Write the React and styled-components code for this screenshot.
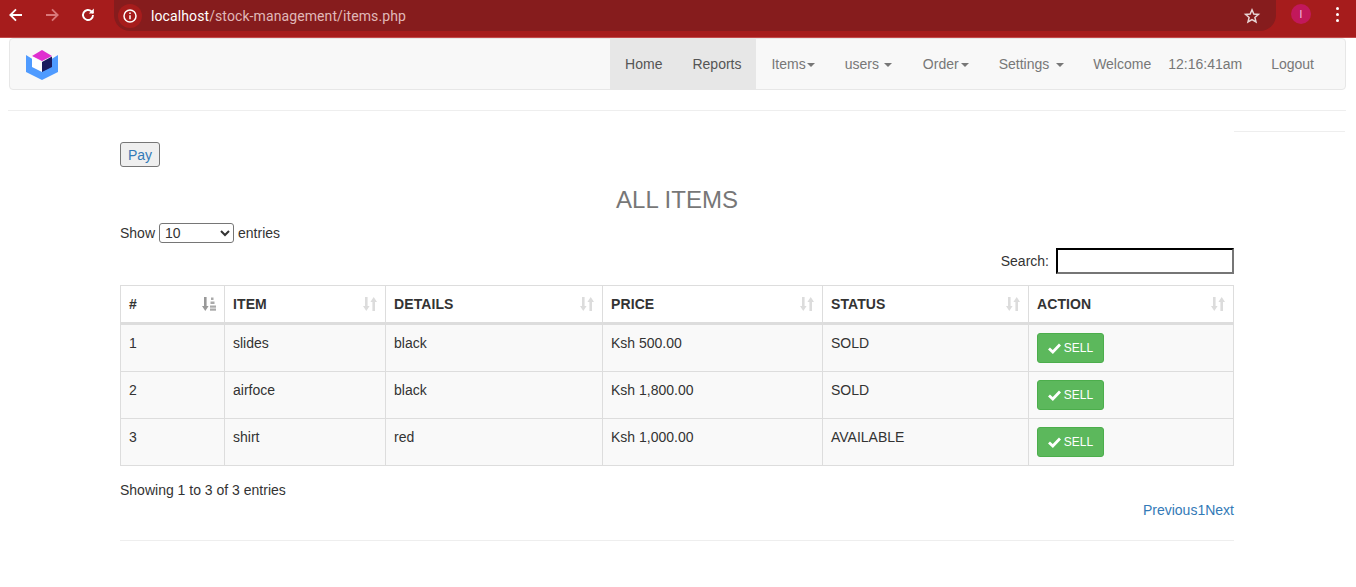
import React from "react";
import styled, { createGlobalStyle } from "styled-components";

const GlobalStyle = createGlobalStyle`
  html, body {
    margin: 0;
    padding: 0;
    background: #fff;
    font-family: "Liberation Sans", Arial, sans-serif;
    font-size: 14px;
    color: #333;
    overflow: hidden;
  }
  * { box-sizing: border-box; }
`;

const items = [
  { id: 1, item: "slides", details: "black", price: "Ksh 500.00", status: "SOLD" },
  { id: 2, item: "airfoce", details: "black", price: "Ksh 1,800.00", status: "SOLD" },
  { id: 3, item: "shirt", details: "red", price: "Ksh 1,000.00", status: "AVAILABLE" },
];

const columns = [
  { label: "#", width: 104, active: true },
  { label: "ITEM", width: 161 },
  { label: "DETAILS", width: 217 },
  { label: "PRICE", width: 220 },
  { label: "STATUS", width: 206 },
  { label: "ACTION", width: 205 },
];

const DOWN_ARROW = "M2 0h2.6v9H6.6L3.3 14 0 9H2z";
const UP_ARROW = "M9.4 14H12V5h2L10.7 0 7.4 5h2z";

const SortGlyph = ({ active }) => (
  <svg width="14" height="14" viewBox="0 0 14 14" fill="currentColor">
    <path d={DOWN_ARROW} />
    {active ? (
      <g fill="#aaa">
        <rect x="9" y="0.5" width="2.5" height="2.5" />
        <rect x="8.5" y="4.5" width="4" height="2.5" />
        <rect x="8" y="8.5" width="6" height="2.2" />
        <rect x="8" y="11.5" width="6" height="2.2" />
      </g>
    ) : (
      <path d={UP_ARROW} />
    )}
  </svg>
);

const App = () => (
  <>
    <GlobalStyle />
    <BrowserBar>
      <NavIcon>
        <svg width="16" height="16" viewBox="0 0 16 16" fill="none" stroke="#fff" strokeWidth="1.8">
          <path d="M14 8H2.5M8 2.3 2.3 8 8 13.7" />
        </svg>
      </NavIcon>
      <NavIcon>
        <svg width="16" height="16" viewBox="0 0 16 16" fill="none" stroke="#d9787a" strokeWidth="1.8">
          <path d="M2 8h11.5M8 2.3 13.7 8 8 13.7" />
        </svg>
      </NavIcon>
      <NavIcon>
        <svg width="16" height="16" viewBox="0 0 16 16" fill="none" stroke="#fff" strokeWidth="1.9">
          <path d="M13 8a5 5 0 1 1-1.5-3.6L13 6" />
          <path d="M13.8 1.6v5H8.8" fill="#fff" stroke="none" />
        </svg>
      </NavIcon>
      <Omnibox>
        <InfoBadge>
          <svg width="16" height="16" viewBox="0 0 16 16" fill="none" stroke="#fff" strokeWidth="1.5">
            <circle cx="8" cy="8" r="6" />
            <path d="M8 7.2v4M8 4.5v1.5" />
          </svg>
        </InfoBadge>
        <Url>
          <b>localhost</b>/stock-management/items.php
        </Url>
        <Star>
          <svg width="18" height="18" viewBox="0 0 18 18" fill="none" stroke="#e8d6d6" strokeWidth="1.5">
            <path d="M9 2.8 10.8 7l4.6.4-3.5 3 1.1 4.500L9 12.500l-4 2.400 1.100-4.500-3.500-3L7.200 7z" />
          </svg>
        </Star>
      </Omnibox>
      <Avatar>I</Avatar>
      <Kebab>
        <i />
        <i />
        <i />
      </Kebab>
    </BrowserBar>

    <Page>
      <Navbar>
        <Brand>
          <svg width="32" height="30" viewBox="0 0 32 30">
            <path d="M0 5 16 15 32 5V22L16 30 0 22Z" fill="#4f9bff" />
            <path d="M16 0 26 6 16 11 6 6Z" fill="#e02fd0" />
            <path d="M6 6.500 16 12V22L6 17Z" fill="#fff" />
            <path d="M26 6.500 16 12V22L26 17Z" fill="#1b1b5e" />
          </svg>
        </Brand>
        <NavLinks>
          <NavLink $active $pad="15px">Home</NavLink>
          <NavLink $active $pad="15px">Reports</NavLink>
          <NavLink $pad="15px">Items<Caret $gap={1} /></NavLink>
          <NavLink $pad="15px 16px 15px 15px">users <Caret $gap={1} /></NavLink>
          <NavLink $pad="15px">Order<Caret $gap={2} /></NavLink>
          <NavLink $pad="15px 14px 15px 15px">Settings <Caret $gap={3} /></NavLink>
          <NavLink $pad="15px 9px 15px 15px">Welcome</NavLink>
          <NavLink $pad="15px 14px 15px 8px">12:16:41am</NavLink>
          <NavLink $pad="15px 31px 15px 15px">Logout</NavLink>
        </NavLinks>
      </Navbar>
      <Rule />
      <ContentRow>
        <Content>
          <PayButton>Pay</PayButton>
          <Title>ALL ITEMS</Title>
          <LengthRow>
            Show
            <LengthSelect defaultValue="10">
              <option>10</option>
              <option>25</option>
              <option>50</option>
              <option>100</option>
            </LengthSelect>
            entries
          </LengthRow>
          <SearchRow>
            Search:
            <SearchInput />
          </SearchRow>
          <Table>
            <colgroup>
              {columns.map((c) => (
                <col key={c.label} width={c.width} />
              ))}
            </colgroup>
            <thead>
              <tr>
                {columns.map((c) => (
                  <HeadCell key={c.label}>
                    {c.label}
                    <SortIcon $active={c.active}>
                      <SortGlyph active={c.active} />
                    </SortIcon>
                  </HeadCell>
                ))}
              </tr>
            </thead>
            <tbody>
              {items.map((row) => (
                <tr key={row.id}>
                  <Cell>{row.id}</Cell>
                  <Cell>{row.item}</Cell>
                  <Cell>{row.details}</Cell>
                  <Cell>{row.price}</Cell>
                  <Cell>{row.status}</Cell>
                  <Cell>
                    <SellButton>
                      <svg width="13" height="11" viewBox="0 0 13 11" fill="none" stroke="#fff" strokeWidth="2.8">
                        <path d="M1 5.500 4.800 9 12 1.500" />
                      </svg>
                      SELL
                    </SellButton>
                  </Cell>
                </tr>
              ))}
            </tbody>
          </Table>
          <InfoRow>Showing 1 to 3 of 3 entries</InfoRow>
          <Pager>
            <a>Previous</a>
            <a>1</a>
            <a>Next</a>
          </Pager>
          <BottomRule />
        </Content>
        <SideRule />
      </ContentRow>
    </Page>
  </>
);

export default App;

const BrowserBar = styled.div`
  height: 38px;
  background: #a61c1c;
  border-bottom: 1px solid #c24a4a;
  display: flex;
  align-items: flex-start;
  padding: 0 8px 0 0;
`;

const NavIcon = styled.div`
  width: 36px;
  height: 30px;
  display: flex;
  align-items: center;
  justify-content: center;
  &:first-child {
    margin-left: -2px;
  }
`;

const Omnibox = styled.div`
  width: 1162px;
  height: 31px;
  margin-left: 8px;
  background: #861c1d;
  border-radius: 0 0 16px 16px / 0 0 16px 16px;
  display: flex;
  align-items: center;
  padding: 0 15px 0 4px;
`;

const InfoBadge = styled.div`
  width: 24px;
  height: 24px;
  border-radius: 50%;
  background: #a61c1c;
  display: flex;
  align-items: center;
  justify-content: center;
`;

const Url = styled.div`
  margin-left: 9px;
  font-family: "Roboto", "Liberation Sans", sans-serif;
  font-size: 14px;
  letter-spacing: 0.1px;
  color: #e0b8b8;
  flex: 1;
  b {
    font-weight: 400;
    color: #fff;
  }
`;

const Star = styled.div`
  width: 18px;
  height: 18px;
`;

const Avatar = styled.div`
  width: 20px;
  height: 20px;
  margin: 4px 0 0 15px;
  border-radius: 50%;
  background: #c2185b;
  color: #f8d0e0;
  font-size: 10px;
  display: flex;
  align-items: center;
  justify-content: center;
`;

const Kebab = styled.div`
  margin: 7px 0 0 25px;
  display: flex;
  flex-direction: column;
  gap: 3px;
  i {
    display: block;
    width: 3px;
    height: 3px;
    border-radius: 50%;
    background: #fff;
  }
`;

const Page = styled.div`
  padding: 0 10px 0 8px;
`;

const Navbar = styled.nav`
  margin-left: 1px;
  height: 52px;
  background: #f8f8f8;
  border: 1px solid #e7e7e7;
  border-radius: 4px;
  display: flex;
  justify-content: space-between;
`;

const Brand = styled.div`
  padding: 11px 0 0 16px;
`;

const NavLinks = styled.div`
  display: flex;
`;

const NavLink = styled.a`
  padding: ${(p) => p.$pad};
  line-height: 20px;
  color: ${(p) => (p.$active ? "#555" : "#777")};
  background: ${(p) => (p.$active ? "#e7e7e7" : "transparent")};
  white-space: pre;
`;

const Caret = styled.span`
  display: inline-block;
  margin-left: ${(p) => p.$gap}px;
  vertical-align: middle;
  border-top: 4px solid #777;
  border-left: 4px solid transparent;
  border-right: 4px solid transparent;
`;

const Rule = styled.hr`
  margin: 20px 0 0;
  border: 0;
  border-top: 1px solid #eee;
`;

const ContentRow = styled.div`
  display: flex;
  padding-left: 112px;
`;

const Content = styled.main`
  width: 1114px;
  padding-top: 31px;
`;

const SideRule = styled.hr`
  width: 111px;
  height: 0;
  margin: 20px 0 0;
  border: 0;
  border-top: 1px solid #eee;
`;

const PayButton = styled.button`
  display: block;
  width: 40px;
  height: 25px;
  padding: 0;
  font: inherit;
  color: #337ab7;
  background: #efefef;
  border: 1px solid #767676;
  border-radius: 3px;
`;

const Title = styled.h3`
  margin: 20px 0 10px;
  font-size: 24px;
  font-weight: 500;
  line-height: 26px;
  color: #777;
  text-align: center;
`;

const LengthRow = styled.div`
  display: flex;
  align-items: center;
  height: 20px;
  gap: 4px;
`;

const LengthSelect = styled.select`
  width: 75px;
  height: 20px;
  padding: 0 0 0 1px;
  font: inherit;
  font-size: 14px;
  line-height: 15px;
  color: #333;
  background: #fff;
  border: 1px solid #767676;
  border-radius: 3px;
`;

const SearchRow = styled.div`
  display: flex;
  justify-content: flex-end;
  align-items: center;
  height: 26px;
  margin-top: 5px;
  gap: 7px;
`;

const SearchInput = styled.input`
  width: 178px;
  height: 26px;
  padding: 0 4px;
  border: 2px inset #767676;
  border-color: #222 #767676 #767676 #222;
  background: #fff;
`;

const Table = styled.table`
  width: 1114px;
  margin-top: 11px;
  table-layout: fixed;
  border-collapse: collapse;
  border: 1px solid #ddd;
`;

const HeadCell = styled.th`
  position: relative;
  height: 38px;
  padding: 8px;
  text-align: left;
  font-weight: 700;
  color: #333;
  letter-spacing: 0.1px;
  border: 1px solid #ddd;
  border-bottom: 3px solid #ddd;
`;

const SortIcon = styled.span`
  position: absolute;
  right: 8px;
  top: 11px;
  display: flex;
  color: ${(p) => (p.$active ? "#999" : "#dcdcdc")};
`;

const Cell = styled.td`
  height: 47px;
  padding: 8px;
  vertical-align: top;
  line-height: 20px;
  border: 1px solid #ddd;
  background: #f9f9f9;
`;

const SellButton = styled.button`
  display: inline-flex;
  align-items: center;
  justify-content: center;
  gap: 3px;
  width: 67px;
  height: 30px;
  padding: 0;
  font: inherit;
  font-size: 12px;
  color: #fff;
  background: #5cb85c;
  border: 1px solid #4cae4c;
  border-radius: 3px;
`;

const InfoRow = styled.div`
  margin-top: 14px;
  line-height: 20px;
`;

const Pager = styled.div`
  display: flex;
  justify-content: flex-end;
  line-height: 20px;
  color: #337ab7;
`;

const BottomRule = styled.hr`
  margin: 20px 0 0;
  border: 0;
  border-top: 1px solid #eee;
`;
